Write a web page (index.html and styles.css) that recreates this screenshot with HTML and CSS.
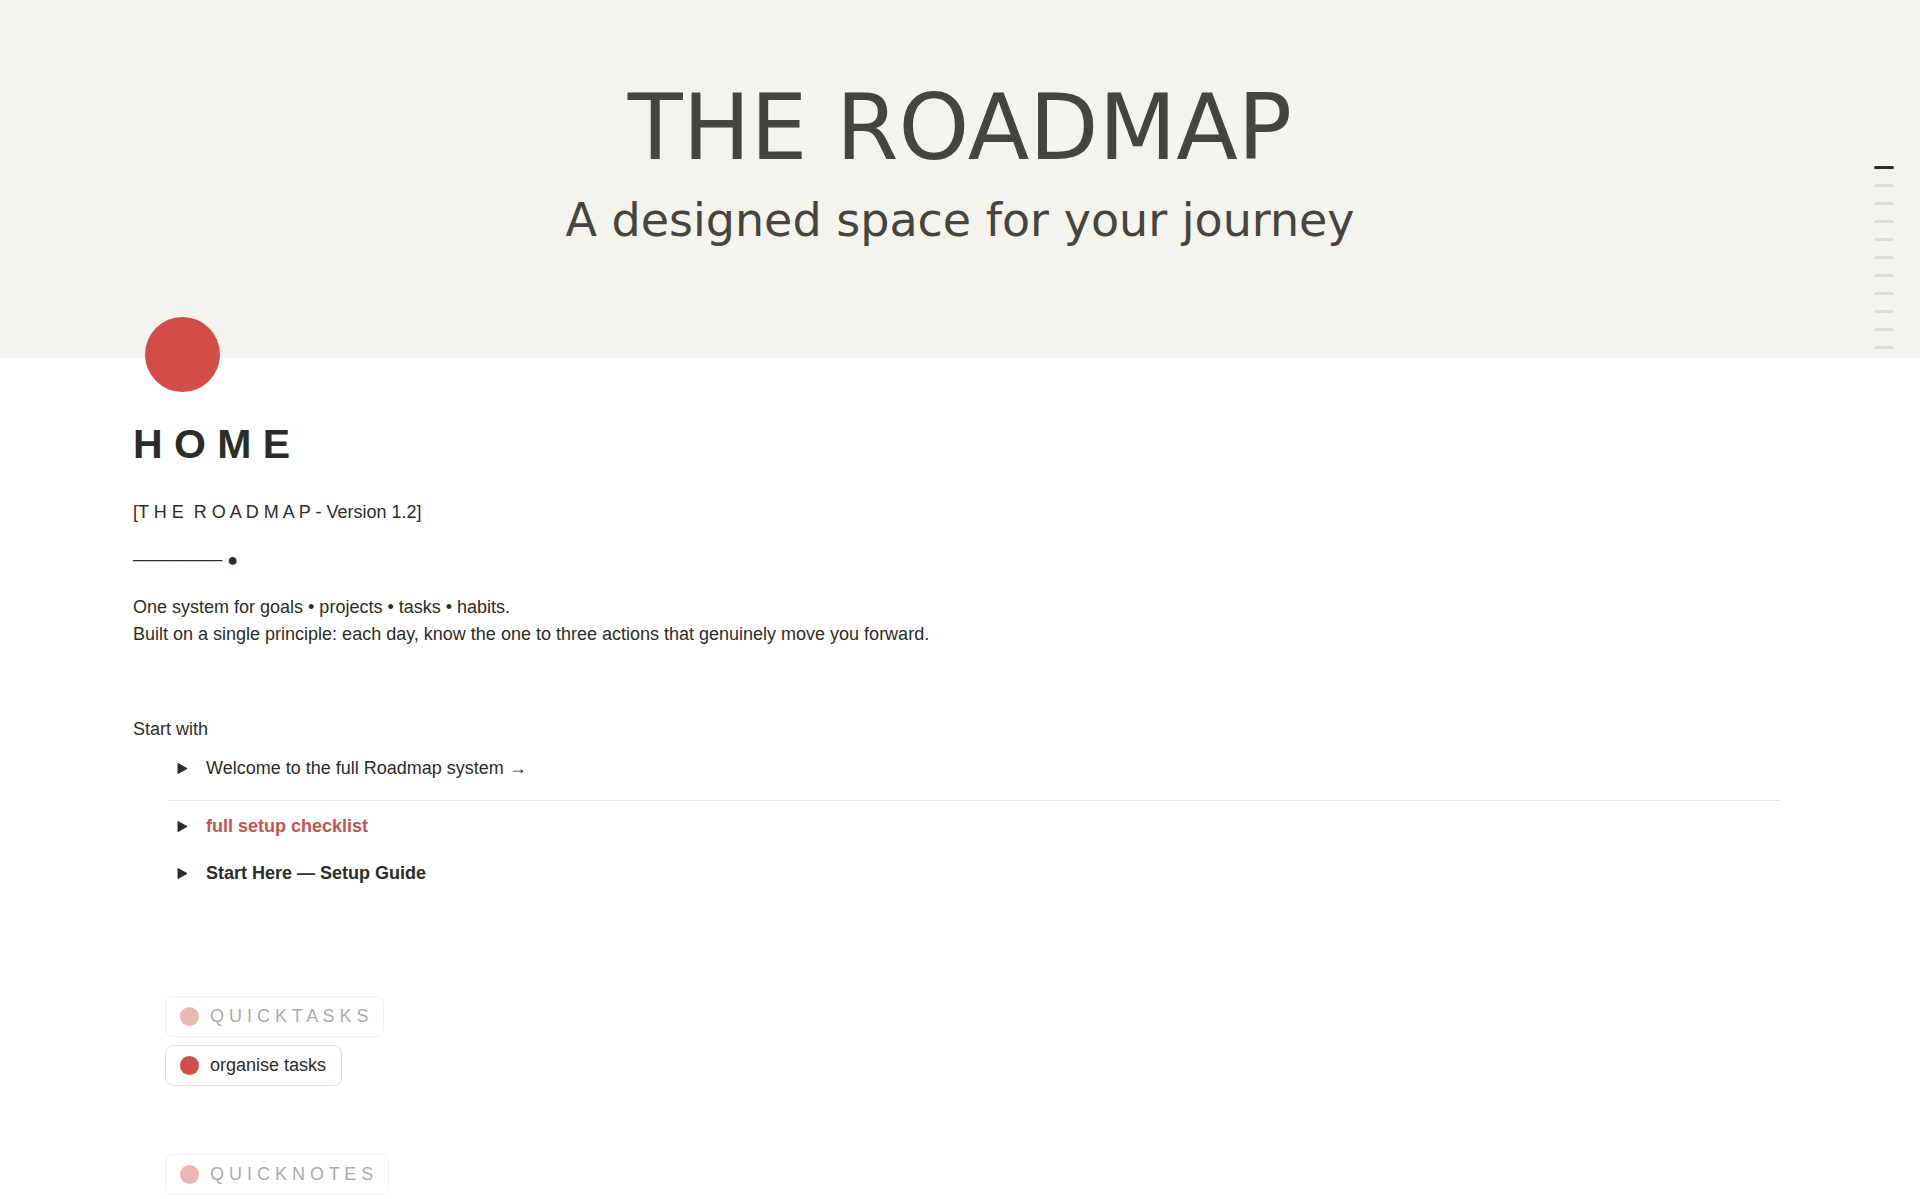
FILE: index.html
```html
<!DOCTYPE html>
<html lang="en">
<head>
    <meta charset="UTF-8">
    <meta name="viewport" content="width=device-width, initial-scale=1.0">
    <title>HOME</title>
    <link rel="stylesheet" href="styles.css">
</head>
<body>

<header class="cover">
    <p class="cover-title">THE ROADMAP</p>
    <p class="cover-subtitle">A designed space for your journey</p>
</header>

<!-- Table of contents markers -->
<nav class="toc" aria-label="Table of contents">
    <a href="#home" class="active" aria-label="Section 1"></a>
    <a href="#home" aria-label="Section 2"></a>
    <a href="#home" aria-label="Section 3"></a>
    <a href="#home" aria-label="Section 4"></a>
    <a href="#home" aria-label="Section 5"></a>
    <a href="#home" aria-label="Section 6"></a>
    <a href="#home" aria-label="Section 7"></a>
    <a href="#home" aria-label="Section 8"></a>
    <a href="#home" aria-label="Section 9"></a>
    <a href="#home" aria-label="Section 10"></a>
    <a href="#home" aria-label="Section 11"></a>
</nav>

<main class="page">
    <div class="page-icon"></div>
    <h1 id="home">H O M E</h1>

    <p class="version">[T H E&nbsp; R O A D M A P - Version 1.2]</p>
    <p class="rule">─────── ●</p>
    <p class="intro">One system for goals • projects • tasks • habits.<br>
    Built on a single principle: each day, know the one to three actions that genuinely move you forward.</p>

    <p class="start">Start with</p>
    <div class="toggles">
        <button type="button" class="toggle">
            <svg viewBox="0 0 13 13"><path d="M2 1.500v10L11 6.500z"/></svg>
            <span>Welcome to the full Roadmap system →</span>
        </button>
        <hr>
        <button type="button" class="toggle accent">
            <svg viewBox="0 0 13 13"><path d="M2 1.500v10L11 6.500z"/></svg>
            <span>full setup checklist</span>
        </button>
        <button type="button" class="toggle strong">
            <svg viewBox="0 0 13 13"><path d="M2 1.500v10L11 6.500z"/></svg>
            <span>Start Here — Setup Guide</span>
        </button>
    </div>

    <div class="actions">
        <button type="button" class="action" disabled><span class="dot"></span>Q U I C K T A S K S</button>
        <button type="button" class="action"><span class="dot"></span>organise tasks</button>
    </div>
    <div class="actions">
        <button type="button" class="action" disabled><span class="dot"></span>Q U I C K N O T E S</button>
    </div>
</main>

</body>
</html>
```
FILE: styles.css
```css
* {
    box-sizing: border-box;
}

body {
    margin: 0;
    background-color: #fff;
    color: #2c2c2b;
    font-family: "Liberation Sans", Arial, sans-serif;
    font-size: 18px;
    line-height: 27px;
}

p,
h1 {
    margin: 0;
}

/* Cover */
.cover {
    height: 358px;
    padding-top: 74px;
    background-color: #f4f3ee;
    color: #444440;
    font-family: "DejaVu Sans", sans-serif;
    text-align: center;
}

.cover-title {
    font-size: 90px;
    line-height: 108px;
}

.cover-subtitle {
    margin-top: 10px;
    font-size: 46px;
    line-height: 56px;
}

/* Markers on the right edge */
.toc {
    position: absolute;
    top: 166px;
    right: 26px;
    display: flex;
    flex-direction: column;
    gap: 15px;
}

.toc a {
    width: 20px;
    height: 3px;
    border-radius: 2px;
    background-color: #dddcd6;
}

.toc a.active {
    background-color: #2c2c2b;
}

/* Page content */
.page {
    padding: 0 140px 0 133px;
}

.page-icon {
    width: 75px;
    height: 75px;
    margin: -41px 0 0 12px;
    border-radius: 50%;
    background-color: #d24c48;
}

h1 {
    margin-top: 28px;
    font-size: 41px;
    line-height: 48px;
}

.version {
    margin-top: 31px;
}

.rule {
    margin-top: 21px;
}

.intro {
    margin-top: 20px;
}

.start {
    margin-top: 68px;
}

/* Toggle list */
.toggles {
    display: flex;
    flex-direction: column;
    align-items: flex-start;
    padding-left: 35px;
}

.toggle {
    display: flex;
    align-items: center;
    gap: 17px;
    margin-top: 20px;
    padding: 0 0 0 8px;
    border: none;
    background: none;
    color: inherit;
    font: inherit;
    cursor: pointer;
}

.toggle:first-child {
    margin-top: 12px;
}

.toggle svg {
    width: 13px;
    height: 13px;
    fill: #2c2c2b;
    stroke: #2c2c2b;
    stroke-linejoin: round;
}

.toggles hr {
    width: 100%;
    margin: 18px 0 0;
    border: none;
    border-top: 1px solid #e2e1de;
}

.toggles hr + .toggle {
    margin-top: 12px;
}

.toggle.accent,
.toggle.strong {
    font-weight: bold;
}

.accent span {
    color: #c4554d;
}

/* Action buttons */
.actions {
    display: flex;
    flex-direction: column;
    align-items: flex-start;
    gap: 8px;
    margin-top: 68px;
    padding-left: 32px;
}

.toggles + .actions {
    margin-top: 109px;
}

.action {
    display: flex;
    align-items: center;
    gap: 11px;
    height: 41px;
    padding: 0 15px 0 14px;
    border: 1px solid #dededc;
    border-radius: 8px;
    background-color: #fff;
    color: #2c2c2b;
    font: inherit;
    cursor: pointer;
}

.action:disabled {
    opacity: 0.4;
    cursor: default;
}

.dot {
    width: 19px;
    height: 19px;
    border-radius: 50%;
    background-color: #d24c48;
}
```
